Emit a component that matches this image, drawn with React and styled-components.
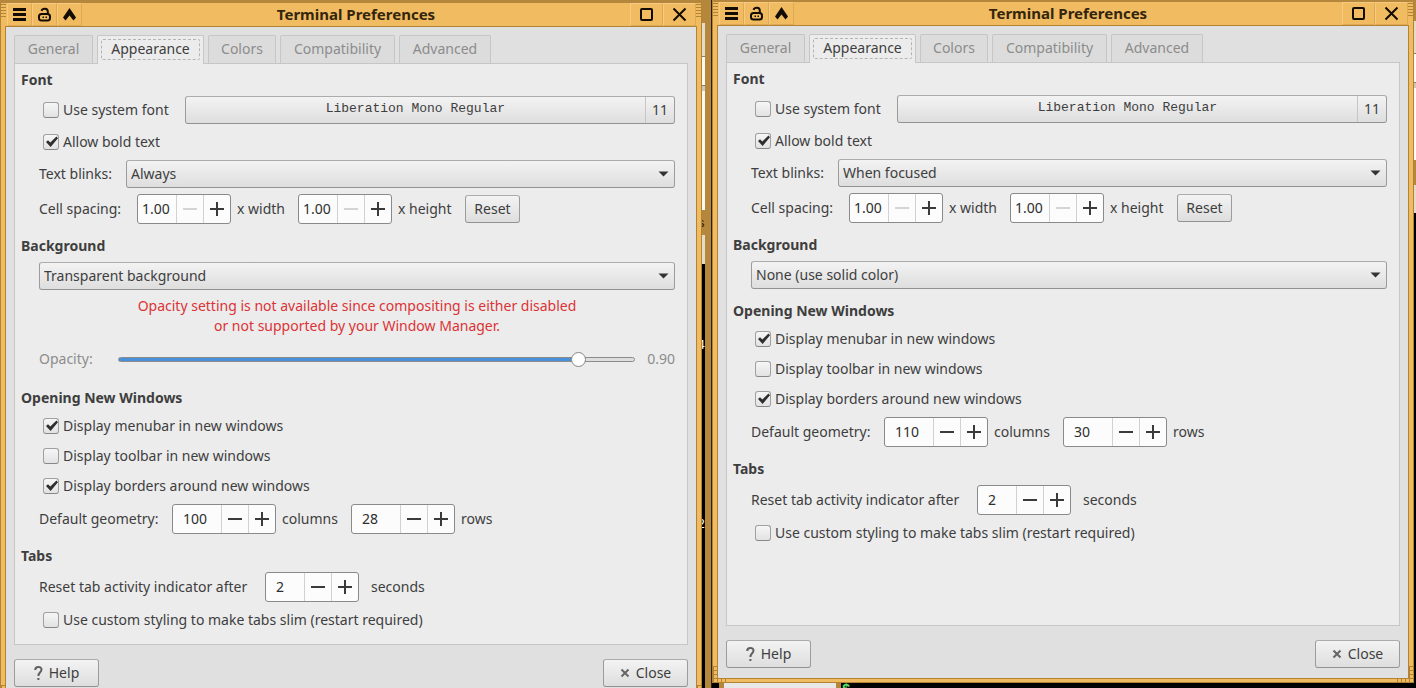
// src/App.jsx
import { useId, useState } from "react";
import styled, { createGlobalStyle, css } from "styled-components";

const colors = {
  orange: "#f1bb62",
  orangeLine: "#b28235",
  brown: "#b5873c",
  windowBg: "#e0e0e0",
  panel: "#ececec",
  line: "#c6c6c6",
  border: "#9c9c9c",
  text: "#3e3e3e",
  muted: "#8c8c8c",
};

const GlobalStyle = createGlobalStyle`
  * {
    box-sizing: border-box;
  }

  body {
    margin: 0;
    background: ${colors.brown};
  }

  body, button, input, select {
    font-family: "Noto Sans", sans-serif;
    font-size: 14px;
    line-height: 20px;
    color: ${colors.text};
  }
`;

/* ---------- desktop ---------- */

const Desktop = styled.main`
  display: grid;
  grid-template-columns: minmax(0, 1fr) 10px minmax(0, 1fr) 2px;
  grid-template-rows: 100%;
  height: 100vh;
  overflow: hidden;
`;

const Column = styled.div`
  display: flex;
  flex-direction: column;
  min-height: 0;
  padding-top: ${(p) => p.$top}px;
`;

const Gap = styled.div`
  display: flex;
  background: ${colors.brown};
  border-right: ${(p) => (p.$edge ? "1px solid #2c2110" : "0")};
`;

const Sliver = styled.div`
  width: ${(p) => p.$width}px;
  overflow: hidden;
`;

const Piece = styled.div`
  height: ${(p) => p.$height}px;
  padding-top: ${(p) => p.$pad || 0}px;
  background: ${(p) => p.$bg};
  color: ${(p) => p.$color || "#fff"};
  border-top: 1px solid ${(p) => p.$line || p.$bg};
  font-family: "Liberation Mono", monospace;
  font-size: 13px;
  line-height: 16px;
  overflow: hidden;
  direction: rtl;
`;

const Beneath = styled.div`
  display: flex;
  flex: none;
  height: 5px;
  overflow: hidden;
  background: #000;
  padding-left: 7px;
`;

const BeneathWindow = styled.div`
  width: 122px;
  background: #e8e8e8;
  border: solid ${colors.brown};
  border-width: 0 5px;
`;

const Prompt = styled.span`
  padding-left: 1px;
  font-family: "Liberation Mono", monospace;
  font-size: 14px;
  line-height: 14px;
  font-weight: bold;
  color: #56e36a;
`;

/* ---------- window frame ---------- */

const Frame = styled.section`
  position: relative;
  display: flex;
  flex-direction: column;
  flex: ${(p) => (p.$fill ? "1" : "none")};
  min-height: 0;
  background: ${colors.orange};
  border: 1px solid ${colors.orangeLine};
  border-top: 0;
`;

const TitleBar = styled.header`
  display: flex;
  flex: none;
  height: 23px;
`;

const Grip = styled.span`
  width: 5px;
  height: 15px;
  margin: ${(p) => (p.$end ? "1px 0 0" : "1px 1px 0 0")};
  background: repeating-linear-gradient(
    ${colors.orangeLine} 0 1px,
    ${colors.orange} 1px 3px
  );
`;

const Title = styled.h1`
  flex: 1;
  margin: 0;
  font-size: 15px;
  line-height: 23px;
  font-weight: bold;
  text-align: center;
  color: #33260d;
`;

const TitleButton = styled.button`
  display: flex;
  align-items: center;
  justify-content: center;
  width: ${(p) => (p.$wide ? 33 : 25)}px;
  height: 23px;
  padding: 0;
  background: ${colors.orange};
  border: 1px solid;
  border-color: #f6ca80 #dfa953 #dfa953 #f6ca80;
`;

const Body = styled.div`
  display: flex;
  flex-direction: column;
  flex: 1;
  margin: 0 4px 3px;
  padding: 8px 8px 10px;
  background: ${colors.windowBg};
  border: 1px solid ${colors.orangeLine};
`;

const Corner = styled.span`
  position: absolute;
  bottom: 0;
  ${(p) => p.$side}: 0;
  width: 16px;
  height: 16px;
  background:
    repeating-linear-gradient(${colors.orangeLine} 0 1px, transparent 1px 4px),
    repeating-linear-gradient(90deg, ${colors.orangeLine} 0 1px, transparent 1px 4px),
    ${colors.orange};
  clip-path: ${(p) =>
    p.$side === "left"
      ? "polygon(0 0, 4px 0, 4px 12px, 100% 12px, 100% 100%, 0 100%)"
      : "polygon(12px 0, 100% 0, 100% 100%, 0 100%, 0 12px, 12px 12px)"};
`;

/* ---------- notebook ---------- */

const Tabs = styled.div`
  display: flex;
  gap: 4px;
  height: 28px;
`;

const Tab = styled.button`
  position: relative;
  width: ${(p) => p.$width}px;
  height: 28px;
  padding: 0 0 2px;
  color: ${colors.muted};
  background: #dcdcdc;
  border: 1px solid ${colors.line};
  border-bottom: 0;
  border-radius: 2px 2px 0 0;

  ${(p) =>
    p.$active &&
    css`
      height: 29px;
      padding-bottom: 3px;
      color: ${colors.text};
      background: ${colors.panel};

      &::after {
        content: "";
        position: absolute;
        inset: 3px 3px 4px;
        border: 1px dashed #b4b4b4;
        border-radius: 2px;
      }
    `}
`;

const Panel = styled.div`
  flex: 1;
  padding: 6px 12px 12px 6px;
  background: ${colors.panel};
  border: 1px solid ${colors.line};
`;

const Section = styled.section`
  display: flex;
  flex-direction: column;
  gap: 6px;
  padding-left: 18px;

  & + & {
    margin-top: 12px;
  }
`;

const Heading = styled.h2`
  margin: 0 0 0 -18px;
  font-size: 14px;
  line-height: 20px;
  font-weight: bold;
`;

const Row = styled.div`
  display: flex;
  align-items: center;
  gap: 12px;
  min-height: ${(p) => p.$height || 24}px;
`;

const Group = styled.div`
  display: flex;
  align-items: center;
  gap: 6px;
`;

const Label = styled.label`
  flex: none;
  min-width: ${(p) => p.$width || 0}px;
  white-space: nowrap;
  color: ${(p) => (p.$dim ? colors.muted : colors.text)};
`;

const Footer = styled.footer`
  display: flex;
  justify-content: space-between;
  margin-top: 14px;
`;

/* ---------- controls ---------- */

const raised = css`
  height: 28px;
  background: linear-gradient(#f3f3f3, #dedede);
  border: 1px solid ${colors.border};
  border-color: #acacac ${colors.border} #929292;
  border-radius: 3px;
`;

const PushButton = styled.button`
  ${raised}
  display: flex;
  align-items: center;
  justify-content: center;
  gap: 6px;
  width: ${(p) => p.$width}px;
  padding: 0;
`;

const FontButton = styled.button`
  ${raised}
  display: flex;
  flex: 1;
  padding: 0;
  margin-left: 4px;
`;

const FontName = styled.span`
  flex: 1;
  font-family: "Liberation Mono", monospace;
  font-size: 13px;
  line-height: 24px;
`;

const FontSize = styled.span`
  width: 29px;
  line-height: 26px;
  border-left: 1px solid ${colors.line};
`;

const CheckLabel = styled.label`
  display: flex;
  align-items: center;
  gap: 4px;
  padding-left: 4px;
`;

const CheckBox = styled.span`
  display: grid;
  width: 16px;
  height: 16px;

  & > * {
    grid-area: 1 / 1;
  }

  svg {
    pointer-events: none;
    visibility: hidden;
    z-index: 1;
  }

  input:checked + svg {
    visibility: visible;
  }
`;

const CheckInput = styled.input`
  appearance: none;
  width: 16px;
  height: 16px;
  margin: 0;
  background: linear-gradient(#f6f6f6, #e2e2e2);
  border: 1px solid #a0a0a0;
  border-bottom-color: #888;
  border-radius: 3px;
`;

const SelectWrap = styled.div`
  display: grid;
  flex: 1;
  align-items: center;

  & > * {
    grid-area: 1 / 1;
  }

  svg {
    justify-self: end;
    margin-right: 6px;
    pointer-events: none;
  }
`;

const SelectInput = styled.select`
  ${raised}
  appearance: none;
  width: 100%;
  padding: 0 20px 0 4px;
`;

const SpinBox = styled.div`
  display: flex;
  height: 30px;
  overflow: hidden;
  background: #fcfcfc;
  border: 1px solid #8a8a8a;
  border-radius: 3px;
`;

const SpinInput = styled.input`
  width: ${(p) => (p.$wide ? 48 : 38)}px;
  padding: 0 0 0 ${(p) => (p.$tight ? 4 : 10)}px;
  color: #2e2e2e;
  background: none;
  border: 0;
`;

const SpinButton = styled.button`
  display: flex;
  align-items: center;
  justify-content: center;
  width: 27px;
  padding: 0;
  color: #3a3a3a;
  background: none;
  border: 0;
  border-left: 1px solid #d2d2d2;

  &:disabled {
    color: #d4d4d4;
  }
`;

const Warning = styled.p`
  margin: 0;
  text-align: center;
  line-height: 20px;
  color: #dc3336;
`;

const Range = styled.input`
  appearance: none;
  flex: 1;
  height: 16px;
  margin: 0 0 0 12px;
  background: none;

  &::-webkit-slider-runnable-track {
    height: 5px;
    background: linear-gradient(#4a90d9, #4a90d9) no-repeat left / var(--fill) 100% #dedede;
    border: 1px solid #8c8c8c;
    border-radius: 3px;
  }

  &::-webkit-slider-thumb {
    appearance: none;
    width: 15px;
    height: 15px;
    margin-top: -6px;
    background: #fff;
    border: 1px solid #858585;
    border-radius: 50%;
  }
`;

/* ---------- icons ---------- */

const MenuIcon = () => (
  <svg width="15" height="15" viewBox="0 0 15 15">
    <path d="M1 2.500h13M1 7.500h13M1 12.500h13" stroke="#120c02" strokeWidth="3" />
  </svg>
);

const LockIcon = () => (
  <svg width="15" height="15" viewBox="0 0 15 15" fill="none" stroke="#120c02">
    <rect x="2" y="7" width="11" height="6.500" rx="2.500" strokeWidth="2" />
    <path d="M4.500 3.800C5.500 1 10.800 1 10.800 4.500V7" strokeWidth="2" />
    <path d="M5.500 10.300h1.500M8.500 10.300h1.500" strokeWidth="1.500" />
  </svg>
);

const ShadeIcon = () => (
  <svg width="15" height="15" viewBox="0 0 15 15">
    <path d="M7.500 1 14 10.500 11.500 13.500 7.500 8.500 3.500 13.500 1 10.500z" fill="#120c02" />
  </svg>
);

const MaximizeIcon = () => (
  <svg width="15" height="15" viewBox="0 0 15 15">
    <rect x="2" y="2" width="11" height="11" rx="1" fill="none" stroke="#120c02" strokeWidth="2" />
  </svg>
);

const CloseIcon = () => (
  <svg width="15" height="15" viewBox="0 0 15 15">
    <path d="M1.500 1.500l12 12M13.500 1.500l-12 12" stroke="#120c02" strokeWidth="2" />
  </svg>
);

const CheckIcon = () => (
  <svg width="16" height="16" viewBox="0 0 16 16">
    <path d="M3 8 5 6.200 7.300 8.500 13.500 2.500 15 4.300 7.600 13z" fill="#2f2f2f" />
  </svg>
);

const ArrowIcon = () => (
  <svg width="11" height="6" viewBox="0 0 11 6">
    <path d="M0.500 0.500h10Q8 3 5.500 5.500 3 3 0.500 0.500z" fill="#333" />
  </svg>
);

const HelpIcon = () => (
  <svg width="9" height="16" viewBox="0 0 9 16" fill="none" stroke="#5f5f5f" strokeWidth="2">
    <path d="M1.200 5C1.200 0.900 7.500 1 7.500 4.600 7.500 7.300 4.400 7.200 4.400 11" />
    <path d="M4.400 13v2" />
  </svg>
);

const CrossIcon = () => (
  <svg width="10" height="10" viewBox="0 0 10 10">
    <path d="M1.500 1.500l7 7M8.500 1.500l-7 7" stroke="#666" strokeWidth="2" />
  </svg>
);

const MinusIcon = () => (
  <svg width="14" height="14" viewBox="0 0 14 14">
    <path d="M0 7h14" stroke="currentColor" strokeWidth="2" />
  </svg>
);

const PlusIcon = () => (
  <svg width="14" height="14" viewBox="0 0 14 14">
    <path d="M0 7h14M7 0v14" stroke="currentColor" strokeWidth="2" />
  </svg>
);

/* ---------- composed parts ---------- */

function Check({ label, checked }) {
  return (
    <CheckLabel>
      <CheckBox>
        <CheckInput type="checkbox" defaultChecked={checked} />
        <CheckIcon />
      </CheckBox>
      {label}
    </CheckLabel>
  );
}

function Select({ id, label, value, options }) {
  return (
    <SelectWrap>
      <SelectInput id={id} aria-label={label} defaultValue={value}>
        {options.map((option) => (
          <option key={option}>{option}</option>
        ))}
      </SelectInput>
      <ArrowIcon />
    </SelectWrap>
  );
}

function Spin({ id, value, wide, tight, atMinimum }) {
  return (
    <SpinBox>
      <SpinInput
        id={id}
        type="text"
        inputMode="decimal"
        defaultValue={value}
        $wide={wide}
        $tight={tight}
      />
      <SpinButton type="button" aria-label="Decrease" disabled={atMinimum}>
        <MinusIcon />
      </SpinButton>
      <SpinButton type="button" aria-label="Increase">
        <PlusIcon />
      </SpinButton>
    </SpinBox>
  );
}

function Opacity({ id }) {
  const [opacity, setOpacity] = useState(0.904);

  return (
    <>
      <Warning>
        Opacity setting is not available since compositing is either disabled
        <br />
        or not supported by your Window Manager.
      </Warning>
      <Row $height={34}>
        <Label htmlFor={id} $width={55} $dim>
          Opacity:
        </Label>
        <Range
          id={id}
          type="range"
          min="0"
          max="1"
          step="any"
          value={opacity}
          onChange={(e) => setOpacity(Number(e.target.value))}
          style={{ "--fill": `${opacity * 100}%` }}
        />
        <Label as="output" htmlFor={id} $dim>
          {opacity.toFixed(2)}
        </Label>
      </Row>
    </>
  );
}

const TABS = [
  { name: "General", width: 79 },
  { name: "Appearance", width: 107, active: true },
  { name: "Colors", width: 68 },
  { name: "Compatibility", width: 115 },
  { name: "Advanced", width: 92 },
];
const BLINKS = ["Never", "When focused", "When unfocused", "Always"];
const BACKGROUNDS = ["None (use solid color)", "Background image", "Transparent background"];

function Preferences({ blinks, background, columns, rows, fill }) {
  const id = useId();

  return (
    <Frame $fill={fill}>
      <TitleBar>
        <Grip />
        <TitleButton type="button" aria-label="Menu">
          <MenuIcon />
        </TitleButton>
        <TitleButton type="button" aria-label="Stick">
          <LockIcon />
        </TitleButton>
        <TitleButton type="button" aria-label="Shade">
          <ShadeIcon />
        </TitleButton>
        <Title>Terminal Preferences</Title>
        <TitleButton type="button" aria-label="Maximize" $wide>
          <MaximizeIcon />
        </TitleButton>
        <TitleButton type="button" aria-label="Close window" $wide>
          <CloseIcon />
        </TitleButton>
        <Grip $end />
      </TitleBar>

      <Body>
        <Tabs role="tablist">
          {TABS.map(({ name, width, active }) => (
            <Tab
              key={name}
              type="button"
              role="tab"
              aria-selected={Boolean(active)}
              $width={width}
              $active={active}
            >
              {name}
            </Tab>
          ))}
        </Tabs>

        <Panel>
          <Section>
            <Heading>Font</Heading>
            <Row>
              <Check label="Use system font" />
              <FontButton type="button">
                <FontName>Liberation Mono Regular</FontName>
                <FontSize>11</FontSize>
              </FontButton>
            </Row>
            <Row>
              <Check label="Allow bold text" checked />
            </Row>
            <Row>
              <Label htmlFor={`${id}-blinks`} $width={75}>
                Text blinks:
              </Label>
              <Select id={`${id}-blinks`} value={blinks} options={BLINKS} />
            </Row>
            <Row>
              <Label as="span" $width={86}>
                Cell spacing:
              </Label>
              <Group>
                <Spin id={`${id}-width`} value="1.00" tight atMinimum />
                <Label htmlFor={`${id}-width`} $width={49}>
                  x width
                </Label>
              </Group>
              <Group>
                <Spin id={`${id}-height`} value="1.00" tight atMinimum />
                <Label htmlFor={`${id}-height`} $width={55}>
                  x height
                </Label>
              </Group>
              <PushButton type="button" $width={55}>
                Reset
              </PushButton>
            </Row>
          </Section>

          <Section>
            <Heading>Background</Heading>
            <Select label="Background" value={background} options={BACKGROUNDS} />
            {background === "Transparent background" && <Opacity id={`${id}-opacity`} />}
          </Section>

          <Section>
            <Heading>Opening New Windows</Heading>
            <Row>
              <Check label="Display menubar in new windows" checked />
            </Row>
            <Row>
              <Check label="Display toolbar in new windows" />
            </Row>
            <Row>
              <Check label="Display borders around new windows" checked />
            </Row>
            <Row>
              <Label as="span" $width={121}>
                Default geometry:
              </Label>
              <Group>
                <Spin id={`${id}-columns`} value={columns} wide />
                <Label htmlFor={`${id}-columns`} $width={57}>
                  columns
                </Label>
              </Group>
              <Group>
                <Spin id={`${id}-rows`} value={rows} wide />
                <Label htmlFor={`${id}-rows`}>rows</Label>
              </Group>
            </Row>
          </Section>

          <Section>
            <Heading>Tabs</Heading>
            <Row>
              <Label htmlFor={`${id}-activity`} $width={214}>
                Reset tab activity indicator after
              </Label>
              <Spin id={`${id}-activity`} value="2" />
              <Label as="span">seconds</Label>
            </Row>
            <Row>
              <Check label="Use custom styling to make tabs slim (restart required)" />
            </Row>
          </Section>
        </Panel>

        <Footer>
          <PushButton type="button" $width={85}>
            <HelpIcon />
            Help
          </PushButton>
          <PushButton type="button" $width={85}>
            <CrossIcon />
            Close
          </PushButton>
        </Footer>
      </Body>
      <Corner $side="left" />
      <Corner $side="right" />
    </Frame>
  );
}

export default function App() {
  return (
    <>
      <GlobalStyle />
      <Desktop>
        <Column $top={3}>
          <Preferences
            blinks="Always"
            background="Transparent background"
            columns="100"
            rows="28"
          />
        </Column>

        <Gap $edge>
          <Sliver $width={3}>
            <Piece $height={23} $bg={colors.brown} />
            <Piece $height={33} $bg="#e4dccb" />
            <Piece $height={29} $bg="#fdfaf2" $line="#8a7d66" />
            <Piece $height={6} $bg="#cfc8b8" $line="#8a7d66" />
            <Piece $height={119} $bg="#fdfaf2" />
            <Piece $height={25} $pad={5} $bg={colors.brown} $color="#241a08">
              s
            </Piece>
            <Piece $height={29} $bg="#e4dccb" />
            <Piece $height={73} $bg="#000" />
            <Piece $height={179} $bg="#000">
              4
            </Piece>
            <Piece $height={172} $bg="#000">
              2
            </Piece>
          </Sliver>
        </Gap>

        <Column $top={2}>
          <Preferences
            blinks="When focused"
            background="None (use solid color)"
            columns="110"
            rows="30"
            fill
          />
          <Beneath>
            <BeneathWindow />
            <Prompt>$</Prompt>
          </Beneath>
        </Column>

        <Gap>
          <Sliver $width={2}>
            <Piece $height={21} $bg={colors.brown} />
            <Piece $height={32} $bg="#e4dccb" />
            <Piece $height={29} $bg="#fdfaf2" $line="#8a7d66" />
            <Piece $height={6} $bg="#cfc8b8" $line="#8a7d66" />
            <Piece $height={72} $bg="#fdfaf2" />
            <Piece $height={25} $bg={colors.brown} />
            <Piece $height={28} $bg="#e4dccb" />
            <Piece $height={475} $bg="#000" />
          </Sliver>
        </Gap>
      </Desktop>
    </>
  );
}
